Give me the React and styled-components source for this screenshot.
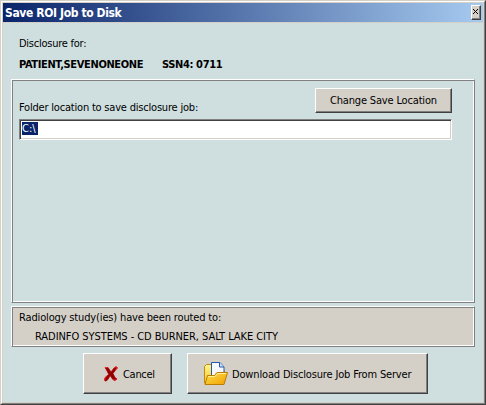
import React from "react";
import styled, { createGlobalStyle } from "styled-components";

const face = "#d4d0c8";
const mint = "#cfdfdf";

const GlobalStyle = createGlobalStyle`
  * { box-sizing: border-box; }
  body { margin: 0; overflow: hidden; }
`;

const Window = styled.main`
  width: 486px;
  height: 405px;
  border: 1px solid;
  border-color: ${face} #404040 #404040 ${face};
  background: ${mint};
  font: 11px/14px "DejaVu Sans Condensed", "DejaVu Sans", sans-serif;
  font-stretch: condensed;
  color: #000;
`;

const Frame = styled.div`
  height: 403px;
  border: 1px solid;
  border-color: #fff #808080 #808080 #fff;
`;

const Client = styled.div`
  height: 401px;
  border: 1px solid ${face};
`;

const TitleBar = styled.header`
  display: flex;
  align-items: flex-start;
  justify-content: space-between;
  height: 20px;
  padding: 2px 2px 0;
  border-bottom: 1px solid ${face};
  background: linear-gradient(90deg, #0a246a, #a6caf0);
  color: #fff;
`;

const Label = styled.span`
  display: block;
  white-space: pre;
  font-weight: ${(p) => (p.$bold ? 700 : 400)};
  letter-spacing: ${(p) => p.$track || 0}px;
`;

const Title = styled(Label)`
  font-size: 12px;
  line-height: 17px;
`;

const CloseButton = styled.button`
  display: flex;
  width: 10px;
  height: 15px;
  padding: 3px 0 0 1px;
  border: 1px solid;
  border-color: #fff #404040 #404040 #fff;
  background: ${face};
  box-shadow: inset -1px -1px #808080;
`;

const Intro = styled.section`
  height: 56px;
  padding: 14px 0 0 16px;
`;

const Identity = styled.div`
  display: grid;
  grid-template-columns: 143px auto;
  justify-content: start;
  margin-top: 7px;
`;

const Panel = styled.section`
  width: 464px;
  height: ${(p) => p.$height}px;
  margin: 0 0 ${(p) => p.$gap}px 8px;
  border: 1px solid;
  border-color: #fff #808080 #808080 #fff;
  background: ${(p) => p.$fill};
  box-shadow: inset 1px 1px #808080, inset -1px -1px #fff;
  padding: ${(p) => p.$pad};
`;

const LocationRow = styled.div`
  display: flex;
  justify-content: space-between;
  width: 433px;
  height: 31px;
`;

const FolderLabel = styled.div`
  padding-top: 13px;
`;

const PushButton = styled.button`
  display: flex;
  align-items: center;
  justify-content: flex-start;
  width: ${(p) => p.$width}px;
  height: ${(p) => p.$height}px;
  padding: ${(p) => p.$drop || 0}px 0 0 ${(p) => p.$inset}px;
  border: 1px solid;
  border-color: #fff #404040 #404040 #fff;
  background: ${face};
  box-shadow: inset -1px -1px #808080;
  font: inherit;
  color: #000;
`;

const PathField = styled.div`
  width: 433px;
  height: 21px;
  padding: 2px;
  border: 1px solid;
  border-color: #808080 #fff #fff #808080;
  background: #fff;
  box-shadow: inset 1px 1px #404040, inset -1px -1px ${face};
`;

const Selection = styled.span`
  display: block;
  width: 16px;
  height: 13px;
  background: #0a246a;
  color: #fff;
  line-height: 13px;
`;

const Destination = styled.div`
  padding: 5px 0 0 16px;
`;

const Actions = styled.footer`
  display: flex;
  gap: 15px;
  padding-left: 80px;
`;

const IconSlot = styled.span`
  display: flex;
  width: ${(p) => p.$width}px;
  padding-bottom: 2px;
`;

const CloseGlyph = () => (
  <svg width="6" height="6" viewBox="0 0 6 6" shapeRendering="crispEdges">
    <path d="M0 0h1v1h1v1h1v-1h1v-1h1v1h-1v1h-1v1h1v1h1v1h-1v-1h-1v-1h-1v1h-1v1h-1v-1h1v-1h1v-1h-1v-1h-1z" fill="#000" />
  </svg>
);

const CancelIcon = () => (
  <svg width="14" height="16" viewBox="0 0 14 16">
    <path d="M1 1.5h3l3 4.5 3-4 2-1.2 1.4 1L9 7.5l2 4 2 1.5-2 1.5-2-.8-2.8-4L3.5 14l-2 1.2L.4 14l.8-2.5 3.5-3.2L2.5 4z" fill="#940000" stroke="#a80000" strokeWidth=".7" />
    <path d="M1 1.5h2.5M10 2l2-1.2 1.4 1-1.6 1.7M.6 14.2l.6-2.6 2-1.8M9.3 13.5l1.6.7 1.7-1.2" fill="none" stroke="#f82020" strokeWidth="1" />
  </svg>
);

const FolderIcon = () => (
  <svg width="25" height="25" viewBox="0 0 25 25">
    <defs>
      <linearGradient id="folderFront" x1="0" y1="0" x2="1" y2="1">
        <stop stopColor="#ffe04f" />
        <stop offset="1" stopColor="#f0a000" />
      </linearGradient>
      <linearGradient id="folderBack" x1="0" y1="0" x2="0" y2="1">
        <stop stopColor="#fff58c" />
        <stop offset="1" stopColor="#f5c62c" />
      </linearGradient>
    </defs>
    <path d="M.5 22V5.5L2.5 3.5h5l2 2.5v3h10.5v13z" fill="url(#folderBack)" stroke="#c18a10" />
    <path d="M7.5 15V1.5h8.5l4 4.5v9z" fill="#f5f9ff" stroke="#2459a8" />
    <path d="M15.5 1.5V6h4.5" fill="#cfe1ff" stroke="#2459a8" />
    <path d="M1 23.5l2.5-9h7l2.5-3h10.5l-3.5 12z" fill="url(#folderFront)" stroke="#bd7b00" />
    <path d="M4.2 15.5h6.8l2.5-3h8.7" fill="none" stroke="#fff29a" />
  </svg>
);

export default function App() {
  return (
    <>
      <GlobalStyle />
      <Window>
        <Frame>
          <Client>
            <TitleBar>
              <Title $bold $track={-0.38}>Save ROI Job to Disk</Title>
              <CloseButton aria-label="Close"><CloseGlyph /></CloseButton>
            </TitleBar>
            <Intro>
              <Label $track={-0.25}>Disclosure for:</Label>
              <Identity>
                <Label $bold $track={-0.36}>PATIENT,SEVENONEONE</Label>
                <Label $bold $track={-0.37}>SSN4: 0711</Label>
              </Identity>
            </Intro>
            <Panel $height={224} $gap={3} $fill={mint} $pad="8px 0 0 7px">
              <LocationRow>
                <FolderLabel><Label $track={-0.2}>Folder location to save disclosure job:</Label></FolderLabel>
                <PushButton $width={137} $height={25} $inset={14}>
                  <Label $track={-0.17}>Change Save Location</Label>
                </PushButton>
              </LocationRow>
              <PathField><Selection>C:\</Selection></PathField>
            </Panel>
            <Panel $height={41} $gap={6} $fill={face} $pad="4px 0 0 7px">
              <Label $track={-0.15}>Radiology study(ies) have been routed to:</Label>
              <Destination><Label $track={-0.06}>RADINFO SYSTEMS - CD BURNER, SALT LAKE CITY</Label></Destination>
            </Panel>
            <Actions>
              <PushButton $width={89} $height={41} $inset={20} $drop={2}>
                <IconSlot $width={19}><CancelIcon /></IconSlot>
                <Label $track={-0.3}>Cancel</Label>
              </PushButton>
              <PushButton $width={241} $height={41} $inset={16} $drop={2}>
                <IconSlot $width={28}><FolderIcon /></IconSlot>
                <Label $track={-0.16}>Download Disclosure Job From Server</Label>
              </PushButton>
            </Actions>
          </Client>
        </Frame>
      </Window>
    </>
  );
}
